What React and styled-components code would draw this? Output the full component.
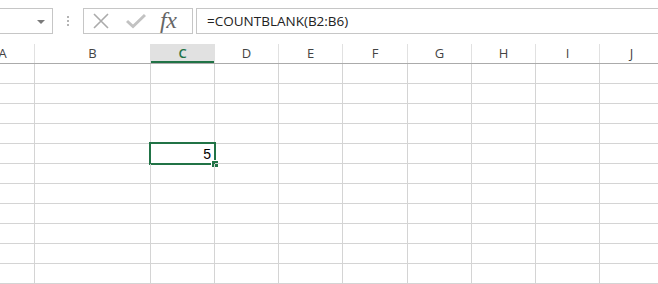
import React from 'react';
import styled, { createGlobalStyle } from 'styled-components';

const GlobalStyle = createGlobalStyle`
  html, body {
    margin: 0;
    padding: 0;
    background: #fff;
  }
  body {
    font-family: "Open Sans", "Liberation Sans", sans-serif;
  }
`;

const Window = styled.div`
  width: 658px;
  height: 284px;
  overflow: hidden;
  background: #fff;
`;

const FormulaBar = styled.div`
  display: flex;
  align-items: flex-start;
  height: 34px;
  padding-top: 8px;
  box-sizing: border-box;
`;

const NameBox = styled.div`
  position: relative;
  width: 53px;
  height: 26px;
  box-sizing: border-box;
  border: 1px solid #c6c6c6;
  border-left: none;
  display: flex;
  align-items: center;
  justify-content: flex-end;
  padding-right: 7px;
`;

const DropArrow = styled.span`
  width: 0;
  height: 0;
  border-left: 4px solid transparent;
  border-right: 4px solid transparent;
  border-top: 4px solid #7a7a7a;
  margin-top: 1px;
`;

const Grip = styled.div`
  width: 30px;
  height: 26px;
  display: flex;
  flex-direction: column;
  align-items: center;
  justify-content: center;
  gap: 2px;
`;

const Dot = styled.span`
  width: 2px;
  height: 2px;
  background: #b4b4b4;
`;

const FxBox = styled.div`
  width: 110px;
  height: 26px;
  box-sizing: border-box;
  border: 1px solid #c6c6c6;
  display: flex;
  align-items: center;
  padding-left: 8px;
  gap: 16px;
`;

const FxLabel = styled.span`
  font-family: "Liberation Serif", "DejaVu Serif", serif;
  font-style: italic;
  font-size: 24px;
  line-height: 1;
  color: #666;
  margin-left: -2px;
  margin-top: -3px;
  letter-spacing: -0.5px;
`;

const FormulaInput = styled.div`
  flex: 1;
  margin-left: 3px;
  height: 26px;
  box-sizing: border-box;
  border-top: 1px solid #c6c6c6;
  border-bottom: 1px solid #c6c6c6;
  border-left: 1px solid #c6c6c6;
  padding-left: 10px;
  display: flex;
  align-items: center;
  font-size: 13.5px;
  color: #222;
  white-space: nowrap;
`;

const COLUMNS = [
  { label: 'A', width: 64 },
  { label: 'B', width: 116 },
  { label: 'C', width: 64 },
  { label: 'D', width: 64 },
  { label: 'E', width: 64 },
  { label: 'F', width: 65 },
  { label: 'G', width: 64 },
  { label: 'H', width: 64 },
  { label: 'I', width: 64 },
  { label: 'J', width: 64 },
];

const template = COLUMNS.map((c) => `${c.width}px`).join(' ');

const Sheet = styled.div`
  margin-left: -29px;
  padding-top: 10px;
`;

const HeaderRow = styled.div`
  display: grid;
  grid-template-columns: ${template};
  border-bottom: 1px solid #ababab;
`;

const HeaderCell = styled.div`
  height: 19px;
  box-sizing: border-box;
  border-right: 1px solid #e1e1e1;
  display: flex;
  align-items: center;
  justify-content: center;
  font-size: 13px;
  color: ${(p) => (p.$active ? '#217346' : '#444')};
  font-weight: ${(p) => (p.$active ? 600 : 400)};
  background: ${(p) => (p.$active ? '#e1e1e1' : '#fff')};
  box-shadow: ${(p) => (p.$active ? 'inset 0 -2px 0 #217346' : 'none')};
  padding-bottom: 1px;
`;

const Row = styled.div`
  display: grid;
  grid-template-columns: ${template};
`;

const Cell = styled.div`
  position: relative;
  height: 20px;
  box-sizing: border-box;
  border-right: 1px solid #d4d4d4;
  border-bottom: 1px solid #d4d4d4;
  display: flex;
  align-items: center;
  justify-content: flex-end;
  padding-right: 3px;
  font-family: "Liberation Sans", Arial, sans-serif;
  font-size: 14px;
  color: #000;
`;

const Selection = styled.div`
  position: absolute;
  left: -2px;
  top: -2px;
  width: 67px;
  height: 23px;
  box-sizing: border-box;
  border: 2px solid #217346;
  pointer-events: none;
`;

const FillHandle = styled.div`
  position: absolute;
  right: -5px;
  bottom: -5px;
  width: 8px;
  height: 8px;
  box-sizing: border-box;
  background: #217346;
  border: 1px solid #fff;
`;

const ROW_COUNT = 11;
const data = { '5-C': '5' };

const CancelIcon = () => (
  <svg width="18" height="18" viewBox="0 0 18 18">
    <path d="M2 2 L16 16 M16 2 L2 16" stroke="#ababab" strokeWidth="1.6" fill="none" />
  </svg>
);

const EnterIcon = () => (
  <svg width="20" height="16" viewBox="0 0 20 16">
    <path d="M1 8 L7 13.5 L19 2" stroke="#c2c2c2" strokeWidth="3" fill="none" />
  </svg>
);

const App = () => (
  <Window>
    <GlobalStyle />
    <FormulaBar>
      <NameBox>
        <DropArrow />
      </NameBox>
      <Grip>
        <Dot />
        <Dot />
        <Dot />
      </Grip>
      <FxBox>
        <CancelIcon />
        <EnterIcon />
        <FxLabel>fx</FxLabel>
      </FxBox>
      <FormulaInput>=COUNTBLANK(B2:B6)</FormulaInput>
    </FormulaBar>
    <Sheet>
      <HeaderRow>
        {COLUMNS.map((c) => (
          <HeaderCell key={c.label} $active={c.label === 'C'}>
            {c.label}
          </HeaderCell>
        ))}
      </HeaderRow>
      {Array.from({ length: ROW_COUNT }, (_, i) => i + 1).map((r) => (
        <Row key={r}>
          {COLUMNS.map((c) => {
            const value = data[`${r}-${c.label}`];
            const selected = r === 5 && c.label === 'C';
            return (
              <Cell key={c.label}>
                {value}
                {selected && (
                  <Selection>
                    <FillHandle />
                  </Selection>
                )}
              </Cell>
            );
          })}
        </Row>
      ))}
    </Sheet>
  </Window>
);

export default App;
